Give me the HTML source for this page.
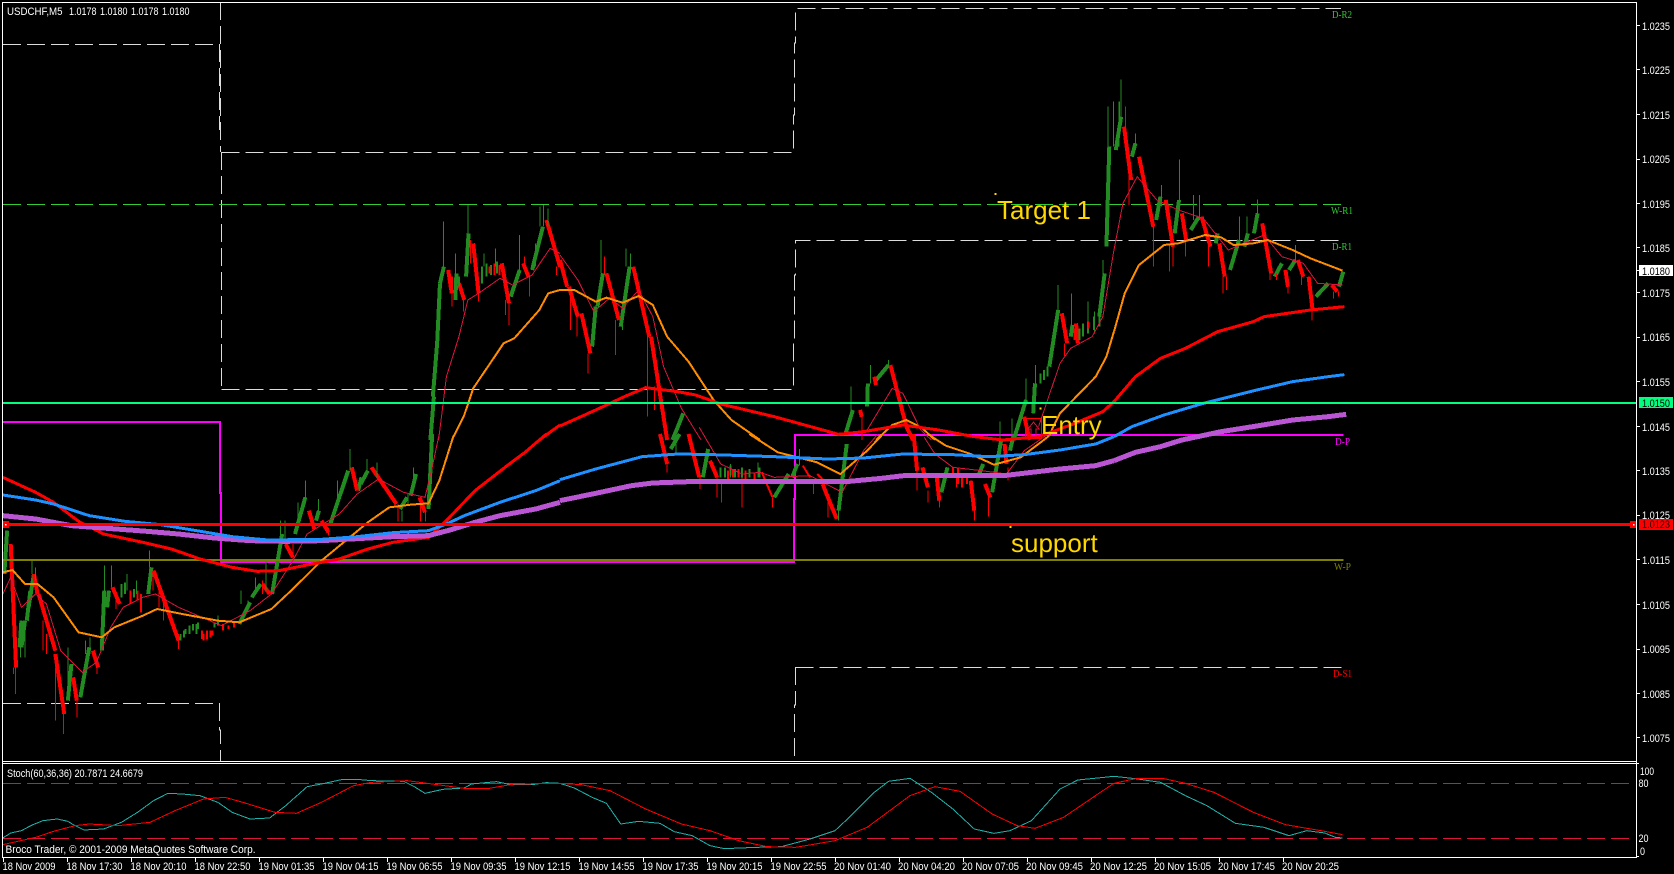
<!DOCTYPE html>
<html><head><meta charset="utf-8"><title>USDCHF,M5</title>
<style>
html,body{margin:0;padding:0;background:#000;width:1674px;height:874px;overflow:hidden}
svg{position:absolute;left:0;top:0;display:block}
svg *{vector-effect:non-scaling-stroke}
path,polyline,line,rect{shape-rendering:crispEdges;fill:none}
text{font-family:"Liberation Sans",sans-serif;font-size:11px;fill:#fff;white-space:pre}
.s{font-family:"Liberation Serif",serif;font-size:10px}
.b{font-size:26px;fill:#ffd700}
.gb{stroke:#228b22;stroke-width:4}
.rb{stroke:#f00;stroke-width:4}
.gt{stroke:#228b22;stroke-width:2}
.rt{stroke:#f00;stroke-width:2}
.w{stroke:#228b22;stroke-width:1}
.wr{stroke:#f00;stroke-width:1}
.d{stroke:#dcdcdc;stroke-width:1;stroke-dasharray:18 6}
.cr{stroke:#dc143c;stroke-width:1}
.or{stroke:#ff8c00;stroke-width:2}
.re{stroke:#f00;stroke-width:3}
.bl{stroke:#1e90ff;stroke-width:3}
.pu{stroke:#ba55d3;stroke-width:5}
.te{stroke:#20b2aa;stroke-width:1}
.sr{stroke:#f00;stroke-width:1}
</style></head><body>
<svg width="1674" height="874" viewBox="0 0 1674 874" xmlns="http://www.w3.org/2000/svg">
<rect x="0" y="0" width="1674" height="874" style="fill:#000"/>

<!-- dashed pivots -->
<path class="d" d="M3 44.5H219M220.5 2V152M219.5 44V130M221.5 152V389M221.5 152.5H793.5V115H794.5V43H795.5V8.5H1341M221.5 389.5H793.5V340H794.5V275H795.5V240.5H1342"/>
<path class="d" d="M3 703.5H219M219.5 703V730H220.5V761M795.5 667.5H1342M795.5 667V705H794.5V761"/>
<path d="M3 204.5H1341" style="stroke:#32cd32;stroke-width:1;stroke-dasharray:18 6"/>
<!-- magenta pivot -->
<path d="M3 422H220V493H221V562H794V499H795V435H1343.5" style="stroke:#f0f;stroke-width:2"/>

<!-- candles -->
<g transform="translate(0 434) scale(.35714 .33333)">
<path class="gb" d="M12 420L20 290M55 640L60 560M60 640L70 560M75 560L85 470M80 520L95 420M190 800L200 690M225 790L250 640M285 650L292 470M300 520L305 470M415 480L424 400M670 570L700 505M705 490L730 450M762 480L790 300M826 300L855 190M885 260L893 230M925 270L975 110M1003 170L1012 130M1010 150L1030 110M1120 225L1140 190M1150 185L1165 120M1200 225L1210 0"/>
<path class="rb" d="M30 330L45 700M95 420L105 480M108 480L155 650M155 660L180 840M205 730L215 800M260 650L275 700M315 460L335 510M430 410L500 620M735 450L755 480M800 330L820 370M865 230L880 285M900 260L920 295M985 100L1000 170M1040 100L1110 210M1175 190L1190 235"/>
<path class="gt" d="M340 490V450M350 480V445M375 490V465M505 620V600M515 610V590M520 600V585M530 600V575M540 590V570M550 600V570M555 585V565M600 580V565M610 575V560"/>
<path class="rt" d="M365 470V510M385 470V500M395 480V535M565 590V615M570 600V620M580 590V615M590 590V610M595 590V605M625 570V590M640 575V585M655 565V580"/>
<path class="wr" d="M44 600V780M38 700V720M178 820V900M155 700V860M215 800V850M272 680V720M325 490V525M428 410V470M445 450V520M500 600V645M458 490V560M580 600V620M735 440V480M820 330V380M920 280V305M1115 210V262M1192 230V262M1178 190V262M130 600V660M120 560V650"/>
<path class="w" d="M70 600V670M58 640V670M90 380V420M100 400V440M190 640V800M240 620V660M252 610V660M292 395V470M312 395V460M355 420V470M382 440V480M418 350V400M610 545V570M675 470V510M695 500V530M715 430V480M745 380V470M785 260V310M798 260V320M835 205V250M856 140V190M892 195V240M945 140V200M980 45V110M1028 75V110M1055 85V130M1125 230V262M1158 100V140M1142 180V215"/>
</g>
<g transform="scale(.35714 .33333)">
<path class="gb" d="M1205 1320L1215 1190M1212 1190L1224 1030M1224 1030L1232 850M1232 850L1243 800M1275 900L1278 820M1305 830L1312 700M1430 890L1455 810M1490 810L1520 680"/>
<path class="rb" d="M1255 810L1265 880M1285 850L1300 900M1325 730L1340 880M1405 790L1425 910M1465 790L1480 830M1530 660L1568 800"/>
<path class="gt" d="M1350 850V800M1362 830V790M1375 825V795M1392 820V785M1275 820V880M1285 830V860"/>
<path class="rt" d="M1370 820V800M1385 825V790M1398 825V795M1265 830V870"/>
<path class="wr" d="M1265 880V920M1298 900V935M1318 720V790M1340 880V905M1415 900V945M1425 900V975M1482 830V890M1558 800V825M1468 770V800"/>
<path class="w" d="M1242 665V820M1228 850V920M1275 760V900M1310 615V700M1355 760V800M1388 745V800M1455 705V810M1500 730V800M1512 620V680M1522 615V680M1535 625V680"/>
</g>
<g transform="translate(560 0) scale(.35714 .33333)">
<path class="gb" d="M90 1040L100 920M105 920L120 820M170 980L195 800M315 1320L345 1240M800 1300L820 1230M860 1220L862 1150M885 1140L920 1095M1270 1320L1305 1200M1325 1240L1330 1150M1370 1100L1395 930M1430 1010L1435 975M1510 950L1525 820M1530 740L1538 440"/>
<path class="rb" d="M0 780L20 860M25 860L50 950M60 940L85 1060M130 820L165 960M205 800L250 1010M255 1010L300 1320M840 1230L845 1250M880 1130L885 1155M925 1095L970 1280M970 1280L988 1320M1405 940L1420 1030M1445 970L1450 1030M1315 1320L1300 1250"/>
<path class="gt" d="M1345 1150V1120M1355 1140V1110M1365 1130V1100M1455 1020V985M1465 1010V970M1478 1000V965M1495 990V950M1510 980V940"/>
<path class="rt" d="M1480 965V985M1440 985V1020"/>
<path class="wr" d="M30 880V990M48 940V1010M78 1060V1120M125 770V820M155 960V1065M245 1010V1250M265 1160V1230M845 1250V1320M1412 1030V1068"/>
<path class="w" d="M115 720V820M175 960V990M185 745V800M198 760V820M815 1160V1230M870 1095V1150M920 1080V1100M1265 1255V1320M1232 1265V1320M1305 1135V1200M1332 1095V1150M1395 855V930M1432 880V975M1478 905V965M1497 935V1000M1535 320V440M1550 305V440M1565 305V440M1520 780V820"/>
</g>
<g transform="translate(560 434) scale(.35714 .33333)">
<path class="rb" d="M280 0L300 90M360 0L390 130M420 80L440 130M735 150L775 255M990 0L1000 110M1015 100L1030 160M1055 130L1062 200M1150 140L1160 230M1190 150L1205 190M1245 30L1250 90"/>
<path class="gb" d="M310 45L335 0M400 130L415 45M600 190L640 120M650 130L665 90M780 230L803 30M1068 175L1085 100M1170 130L1185 90M1210 175L1235 20M1260 50L1270 5"/>
<path class="rt" d="M470 110V135M485 105V130M500 105V130M520 110V135M545 115V135M565 115L595 190M680 95L700 130M720 120L735 135M1100 100V130M1125 130V160M1115 100V150M1140 120V150"/>
<path class="gt" d="M450 130V100M462 130V100M478 125V95M490 130V105M510 130V100M530 130V105M558 130V100"/>
<path class="wr" d="M300 85V115M392 130V165M440 130V190M452 150V205M510 130V220M595 190V220M710 140V180M750 200V250M1000 100V170M1030 170V205M1062 200V220M1160 230V260M1200 190V248M1255 100V140M1110 130V160"/>
<path class="w" d="M325 30V60M478 90V130M555 85V130M670 45V95M780 230V260"/>
</g>
<g transform="translate(1114 0) scale(.35714 .33333)">
<path class="gb" d="M5 450L20 350M50 470L60 430M118 660L130 590M170 700L182 600M215 690L238 650M285 730L290 700M325 810L350 720M365 740L375 700M392 700L402 640M450 830L470 790M490 810L508 780M565 890L600 850M630 860L642 815"/>
<path class="rb" d="M28 380L48 540M70 470L110 680M145 600L165 740M190 640L202 720M245 650L270 740M295 730L310 830M415 670L440 820M480 810L487 860M515 780L530 830M545 830L556 930M610 855L625 875"/>
<path class="wr" d="M32 320V380M42 530V615M110 680V800M155 730V815M165 740V800M200 720V770M265 740V800M305 830V880M315 830V870M437 820V840M455 820V840M487 860V880M525 830V855M555 930V962M615 875V895M628 875V890"/>
<path class="w" d="M20 238V350M15 305V350M60 400V450M133 555V620M183 478V600M222 585V660M240 585V660M352 650V720M372 650V700M402 598V640M508 735V780"/>
</g>

<path d="M3 560H1343.5" style="stroke:#808000;stroke-width:2"/>

<!-- thin MA -->
<polyline class="cr" transform="translate(0 434) scale(.35714 .33333)" points="8,480 30,430 60,520 100,480 130,510 170,650 230,715 270,685 310,580 345,520 400,490 435,480 500,520 620,575 700,530 760,480 820,380 860,300 950,240 1000,180 1060,135 1130,175 1190,190 1210,100 1230,0"/>
<polyline class="cr" transform="scale(.35714 .33333)" points="1228,1320 1250,1130 1285,1010 1310,900 1340,880 1400,835 1435,855 1490,825 1540,745 1568,760"/>
<polyline class="cr" transform="translate(560 0) scale(.35714 .33333)" points="0,765 50,840 95,935 140,893 175,925 220,870 260,950 290,1100 340,1225 395,1320"/>
<polyline class="cr" transform="translate(560 434) scale(.35714 .33333)" points="390,-20 450,90 510,120 560,115 600,130 700,125 790,175 850,50 890,0"/>
<polyline class="cr" transform="translate(560 0) scale(.35714 .33333)" points="860,1290 930,1165 960,1180 1010,1290 1040,1320"/>
<polyline class="cr" transform="translate(560 434) scale(.35714 .33333)" points="1020,10 1050,60 1100,100 1180,110 1250,120 1300,50 1360,5"/>
<polyline class="cr" transform="translate(560 0) scale(.35714 .33333)" points="1340,1280 1400,1090 1430,1045 1490,1010 1520,950 1551,750"/>
<polyline class="cr" transform="translate(1114 0) scale(.35714 .33333)" points="0,750 25,610 65,530 120,600 180,630 250,655 320,750 420,705 470,770 530,790 570,850 640,855"/>

<!-- orange MA -->
<polyline class="or" transform="translate(0 434) scale(.35714 .33333)" points="8,415 35,408 70,450 105,450 150,490 220,595 285,610 320,580 400,545 440,525 510,540 610,560 670,565 760,525 820,465 900,380 1030,265 1090,220 1150,212 1200,208 1230,140 1270,5"/>
<polyline class="or" transform="scale(.35714 .33333)" points="1270,1310 1300,1245 1325,1165 1385,1070 1410,1030 1440,1015 1510,930 1535,880 1568,870"/>
<polyline class="or" transform="translate(560 0) scale(.35714 .33333)" points="0,870 40,870 100,905 130,893 175,908 220,888 260,915 300,1010 360,1085 430,1200 480,1260 560,1320"/>
<polyline class="or" transform="translate(560 434) scale(.35714 .33333)" points="530,0 610,55 720,85 785,120 860,50 900,5"/>
<polyline class="or" transform="translate(560 0) scale(.35714 .33333)" points="885,1320 930,1275 970,1260 1015,1285 1050,1320"/>
<polyline class="or" transform="translate(560 434) scale(.35714 .33333)" points="1030,0 1080,35 1150,60 1215,92 1290,70 1340,30 1370,5"/>
<polyline class="or" transform="translate(560 0) scale(.35714 .33333)" points="1370,1305 1400,1240 1500,1130 1530,1070 1551,995"/>
<polyline class="or" transform="translate(1114 0) scale(.35714 .33333)" points="0,995 30,880 70,795 140,735 180,730 255,705 300,712 335,735 390,730 430,720 500,750 550,775 640,812"/>

<!-- red MA -->
<polyline class="re" transform="translate(0 434) scale(.35714 .33333)" points="8,130 100,175 150,205 220,262 290,300 400,325 480,345 560,375 650,400 720,412 780,410 850,395 950,375 1030,345 1100,325 1200,310 1250,260 1330,170 1420,95 1470,55 1530,0"/>
<polyline class="re" transform="scale(.35714 .33333)" points="1510,1320 1568,1275"/>
<polyline class="re" transform="translate(560 0) scale(.35714 .33333)" points="0,1278 100,1230 180,1190 240,1163 330,1175 380,1185 450,1212 600,1250 780,1303 850,1295 960,1275 1060,1290 1160,1310 1240,1320 1340,1310 1430,1275 1520,1235 1551,1205"/>
<polyline class="re" transform="translate(1114 0) scale(.35714 .33333)" points="0,1205 60,1130 130,1075 200,1045 290,995 390,965 420,950 550,930 645,920"/>

<!-- orchid MA -->
<polyline class="pu" transform="translate(0 434) scale(.35714 .33333)" points="8,245 100,255 200,275 300,283 400,291 500,300 600,312 700,320 800,322 900,320 1000,314 1100,308 1200,305 1260,288 1330,265 1400,245 1500,225 1568,205"/>
<polyline class="pu" transform="translate(560 434) scale(.35714 .33333)" points="0,200 100,178 200,155 260,147 360,143 500,142 660,143 800,143 900,133 970,124 1100,124 1250,124 1400,105 1500,95 1551,80"/>
<polyline class="pu" transform="translate(1114 434) scale(.35714 .33333)" points="0,80 60,55 130,38 190,18 300,-7 400,-24 500,-42 600,-52 650,-59"/>

<!-- blue MA -->
<polyline class="bl" transform="translate(0 434) scale(.35714 .33333)" points="8,183 100,198 150,210 250,245 350,262 450,272 550,290 650,308 750,318 900,316 1000,308 1100,296 1200,290 1250,270 1300,245 1400,205 1500,170 1568,140"/>
<polyline class="bl" transform="translate(560 434) scale(.35714 .33333)" points="0,137 100,105 230,68 330,60 430,62 600,68 750,75 850,72 960,60 1100,62 1200,68 1300,62 1400,48 1500,30 1551,8"/>
<polyline class="bl" transform="translate(1114 0) scale(.35714 .33333)" points="0,1310 50,1280 140,1245 250,1210 400,1170 500,1145 600,1130 645,1124"/>

<!-- horizontal levels -->
<path d="M3 403H1636" style="stroke:#00ff7f;stroke-width:2"/>
<path d="M3 524.5H1636" style="stroke:#f00;stroke-width:3"/>
<rect x="3" y="521" width="6" height="7" style="fill:#f00"/>
<rect x="5" y="524" width="1.5" height="1.5" style="fill:#fff"/>
<rect x="1630" y="521" width="6" height="7" style="fill:#f00"/>
<rect x="1633" y="524" width="1.5" height="1.5" style="fill:#fff"/>

<!-- arrow box -->
<rect x="1025.5" y="418.5" width="16" height="20" style="stroke:#f00;stroke-width:1"/>
<path d="M1033.5 422L1039 429H1036V436H1031V429H1028Z" style="stroke:#dc143c;stroke-width:1"/>

<!-- big annotations -->
<rect x="994.5" y="193" width="2" height="2" style="fill:#ffd700"/>
<text class="b" x="997" y="219">Target 1</text>
<rect x="1039.5" y="407.5" width="2" height="2" style="fill:#ffd700"/>
<text class="b" x="1041" y="434">Entry</text>
<rect x="1009.5" y="526" width="2" height="2" style="fill:#ffd700"/>
<text class="b" x="1011" y="552">support</text>

<!-- pivot labels -->
<text class="s" x="1332" y="18" textLength="20" lengthAdjust="spacingAndGlyphs" style="fill:#32cd32">D-R2</text>
<text class="s" x="1331" y="214" textLength="22" lengthAdjust="spacingAndGlyphs" style="fill:#32cd32">W-R1</text>
<text class="s" x="1332" y="250" textLength="20" lengthAdjust="spacingAndGlyphs" style="fill:#32cd32">D-R1</text>
<text class="s" x="1335" y="445" textLength="15" lengthAdjust="spacingAndGlyphs" style="fill:#f0f">D-P</text>
<text class="s" x="1334" y="570" textLength="17" lengthAdjust="spacingAndGlyphs" style="fill:#808000">W-P</text>
<text class="s" x="1333" y="677" textLength="19" lengthAdjust="spacingAndGlyphs" style="fill:#f00">D-S1</text>

<!-- stochastic -->
<path d="M3 783.5H1630M3 838.5H1630" style="stroke:#dc143c;stroke-width:1;stroke-dasharray:18 6"/>
<polyline class="te" transform="translate(0 434) scale(.35714 .33333)" points="8,1212 30,1197 60,1190 90,1173 120,1160 160,1155 190,1162 205,1172 235,1188 290,1185 340,1165 385,1135 430,1100 470,1078 510,1080 560,1085 610,1105 650,1135 700,1155 755,1152 800,1115 860,1058 900,1050 960,1036 1000,1036 1040,1040 1130,1042 1160,1058 1190,1078 1240,1066 1300,1062 1320,1050 1390,1043 1430,1052 1490,1052 1530,1046 1568,1048"/>
<polyline class="te" transform="translate(560 434) scale(.35714 .33333)" points="0,1048 40,1062 90,1090 130,1108 170,1170 220,1162 280,1168 320,1193 370,1205 420,1235 460,1244 550,1240 620,1238 700,1215 770,1190 810,1150 880,1075 920,1042 980,1033 1040,1075 1100,1125 1160,1185 1215,1198 1260,1190 1320,1160 1400,1065 1450,1038 1551,1027"/>
<polyline class="te" transform="translate(1114 434) scale(.35714 .33333)" points="0,1027 60,1034 130,1045 200,1085 260,1115 340,1168 420,1180 490,1205 540,1190 590,1197 620,1210 640,1212"/>
<polyline class="sr" transform="translate(0 434) scale(.35714 .33333)" points="8,1232 100,1210 150,1192 210,1175 250,1170 330,1175 420,1165 490,1130 570,1095 630,1090 680,1105 770,1135 830,1138 900,1105 990,1055 1040,1045 1140,1040 1210,1050 1300,1063 1370,1063 1440,1050 1568,1048"/>
<polyline class="sr" transform="translate(560 434) scale(.35714 .33333)" points="0,1048 60,1052 140,1070 240,1125 340,1170 420,1190 500,1220 580,1238 660,1240 770,1220 860,1180 980,1085 1050,1058 1120,1072 1210,1140 1280,1175 1330,1183 1410,1150 1520,1070 1551,1048"/>
<polyline class="sr" transform="translate(1114 434) scale(.35714 .33333)" points="0,1048 60,1034 140,1034 200,1048 280,1075 390,1135 480,1172 590,1192 640,1202"/>

<!-- frames -->
<path d="M2.5 2.5H1636.5V857.5H2.5ZM2.5 761.5H1636.5M2.5 763.5H1636.5" style="stroke:#fff;stroke-width:1"/>

<!-- price ticks -->
<path d="M1637 25.5h3M1637 69.5h3M1637 114.5h3M1637 159.5h3M1637 203.5h3M1637 247.5h3M1637 292.5h3M1637 337.5h3M1637 381.5h3M1637 426.5h3M1637 470.5h3M1637 515.5h3M1637 559.5h3M1637 604.5h3M1637 649.5h3M1637 693.5h3M1637 737.5h3M1637 270.5h3M1637 763.5h2M1637 856.5h2" style="stroke:#fff;stroke-width:1"/>
<path d="M3.5 858V862M67.5 858V862M131.5 858V862M195.5 858V862M259.5 858V862M323.5 858V862M387.5 858V862M451.5 858V862M515.5 858V862M579.5 858V862M643.5 858V862M707.5 858V862M771.5 858V862M835.5 858V862M899.5 858V862M963.5 858V862M1027.5 858V862M1091.5 858V862M1155.5 858V862M1219.5 858V862M1283.5 858V862" style="stroke:#fff;stroke-width:1"/>

<!-- price labels -->
<g>
<text x="1642" y="30" textLength="28" lengthAdjust="spacingAndGlyphs">1.0235</text>
<text x="1642" y="74" textLength="28" lengthAdjust="spacingAndGlyphs">1.0225</text>
<text x="1642" y="119" textLength="28" lengthAdjust="spacingAndGlyphs">1.0215</text>
<text x="1642" y="163" textLength="28" lengthAdjust="spacingAndGlyphs">1.0205</text>
<text x="1642" y="208" textLength="28" lengthAdjust="spacingAndGlyphs">1.0195</text>
<text x="1642" y="252" textLength="28" lengthAdjust="spacingAndGlyphs">1.0185</text>
<text x="1642" y="297" textLength="28" lengthAdjust="spacingAndGlyphs">1.0175</text>
<text x="1642" y="341" textLength="28" lengthAdjust="spacingAndGlyphs">1.0165</text>
<text x="1642" y="386" textLength="28" lengthAdjust="spacingAndGlyphs">1.0155</text>
<text x="1642" y="431" textLength="28" lengthAdjust="spacingAndGlyphs">1.0145</text>
<text x="1642" y="475" textLength="28" lengthAdjust="spacingAndGlyphs">1.0135</text>
<text x="1642" y="519" textLength="28" lengthAdjust="spacingAndGlyphs">1.0125</text>
<text x="1642" y="564" textLength="28" lengthAdjust="spacingAndGlyphs">1.0115</text>
<text x="1642" y="609" textLength="28" lengthAdjust="spacingAndGlyphs">1.0105</text>
<text x="1642" y="653" textLength="28" lengthAdjust="spacingAndGlyphs">1.0095</text>
<text x="1642" y="698" textLength="28" lengthAdjust="spacingAndGlyphs">1.0085</text>
<text x="1642" y="742" textLength="28" lengthAdjust="spacingAndGlyphs">1.0075</text>
</g>
<rect x="1639" y="265" width="34" height="11" style="fill:#fff"/>
<text x="1642" y="275" textLength="28" lengthAdjust="spacingAndGlyphs" style="fill:#000">1.0180</text>
<rect x="1639" y="397" width="34" height="11" style="fill:#00ff7f"/>
<text x="1642" y="407" textLength="28" lengthAdjust="spacingAndGlyphs" style="fill:#000">1.0150</text>
<rect x="1639" y="519" width="34" height="11" style="fill:#f00"/>
<text x="1642" y="528" textLength="28" lengthAdjust="spacingAndGlyphs" style="fill:#200">1.0123</text>

<!-- stoch scale -->
<text x="1640" y="775" textLength="14" lengthAdjust="spacingAndGlyphs">100</text>
<text x="1638.5" y="787" textLength="10" lengthAdjust="spacingAndGlyphs">80</text>
<text x="1638.5" y="842" textLength="10" lengthAdjust="spacingAndGlyphs">20</text>
<text x="1640" y="855" textLength="5" lengthAdjust="spacingAndGlyphs">0</text>

<!-- captions -->
<text x="7" y="15" textLength="55.5" lengthAdjust="spacingAndGlyphs">USDCHF,M5</text>
<text x="69" y="15" textLength="27.5" lengthAdjust="spacingAndGlyphs">1.0178</text>
<text x="100" y="15" textLength="27.5" lengthAdjust="spacingAndGlyphs">1.0180</text>
<text x="131" y="15" textLength="27.5" lengthAdjust="spacingAndGlyphs">1.0178</text>
<text x="162" y="15" textLength="27.5" lengthAdjust="spacingAndGlyphs">1.0180</text>
<text x="7" y="777" textLength="136" lengthAdjust="spacingAndGlyphs">Stoch(60,36,36) 20.7871 24.6679</text>
<text x="5.5" y="853" textLength="250" lengthAdjust="spacingAndGlyphs">Broco Trader, © 2001-2009 MetaQuotes Software Corp.</text>

<!-- time labels -->
<g>
<text x="2.5" y="870" textLength="53" lengthAdjust="spacingAndGlyphs">18 Nov 2009</text>
<text x="66.5" y="870" textLength="56" lengthAdjust="spacingAndGlyphs">18 Nov 17:30</text>
<text x="130.5" y="870" textLength="56" lengthAdjust="spacingAndGlyphs">18 Nov 20:10</text>
<text x="194.5" y="870" textLength="56" lengthAdjust="spacingAndGlyphs">18 Nov 22:50</text>
<text x="258.5" y="870" textLength="56" lengthAdjust="spacingAndGlyphs">19 Nov 01:35</text>
<text x="322.5" y="870" textLength="56" lengthAdjust="spacingAndGlyphs">19 Nov 04:15</text>
<text x="386.5" y="870" textLength="56" lengthAdjust="spacingAndGlyphs">19 Nov 06:55</text>
<text x="450.5" y="870" textLength="56" lengthAdjust="spacingAndGlyphs">19 Nov 09:35</text>
<text x="514.5" y="870" textLength="56" lengthAdjust="spacingAndGlyphs">19 Nov 12:15</text>
<text x="578.5" y="870" textLength="56" lengthAdjust="spacingAndGlyphs">19 Nov 14:55</text>
<text x="642.5" y="870" textLength="56" lengthAdjust="spacingAndGlyphs">19 Nov 17:35</text>
<text x="706.5" y="870" textLength="56" lengthAdjust="spacingAndGlyphs">19 Nov 20:15</text>
<text x="770.5" y="870" textLength="56" lengthAdjust="spacingAndGlyphs">19 Nov 22:55</text>
<text x="834" y="870" textLength="57" lengthAdjust="spacingAndGlyphs">20 Nov 01:40</text>
<text x="898" y="870" textLength="57" lengthAdjust="spacingAndGlyphs">20 Nov 04:20</text>
<text x="962" y="870" textLength="57" lengthAdjust="spacingAndGlyphs">20 Nov 07:05</text>
<text x="1026" y="870" textLength="57" lengthAdjust="spacingAndGlyphs">20 Nov 09:45</text>
<text x="1090" y="870" textLength="57" lengthAdjust="spacingAndGlyphs">20 Nov 12:25</text>
<text x="1154" y="870" textLength="57" lengthAdjust="spacingAndGlyphs">20 Nov 15:05</text>
<text x="1218" y="870" textLength="57" lengthAdjust="spacingAndGlyphs">20 Nov 17:45</text>
<text x="1282" y="870" textLength="57" lengthAdjust="spacingAndGlyphs">20 Nov 20:25</text>
</g>
</svg>
</body></html>
